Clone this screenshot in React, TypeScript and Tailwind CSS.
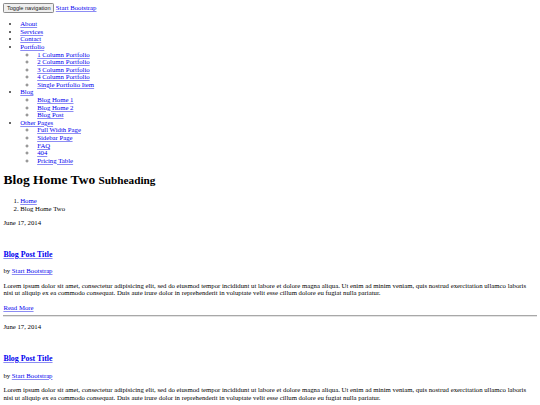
const lorem =
  "Lorem ipsum dolor sit amet, consectetur adipisicing elit, sed do eiusmod tempor incididunt ut labore et dolore magna aliqua. Ut enim ad minim veniam, quis nostrud exercitation ullamco laboris nisi ut aliquip ex ea commodo consequat. Duis aute irure dolor in reprehenderit in voluptate velit esse cillum dolore eu fugiat nulla pariatur.";

const menu: { label: string; children?: string[] }[] = [
  { label: "About" },
  { label: "Services" },
  { label: "Contact" },
  {
    label: "Portfolio",
    children: ["1 Column Portfolio", "2 Column Portfolio", "3 Column Portfolio", "4 Column Portfolio", "Single Portfolio Item"],
  },
  { label: "Blog", children: ["Blog Home 1", "Blog Home 2", "Blog Post"] },
  { label: "Other Pages", children: ["Full Width Page", "Sidebar Page", "FAQ", "404", "Pricing Table"] },
];

function Link({ children }: { children: React.ReactNode }) {
  return (
    <a href="#" className="text-[#0000ee] underline decoration-[#8c8cf4]">
      {children}
    </a>
  );
}

function Rule() {
  return <hr className="my-2 h-0 border-t border-b border-t-[#a8a8a8] border-b-[#e4e4e4]" />;
}

function Post() {
  return (
    <div>
      {/* icon column: the font icon never loaded, so the paragraph is empty */}
      <div>
        <p className="my-4">
          <i />
        </p>
        <p className="my-4">June 17, 2014</p>
      </div>
      {/* broken placeholder image, still leaves one line */}
      <div className="leading-[22px]">
        <a href="#">
          <span className="inline-block" />
        </a>
      </div>
      <div>
        <h3 className="my-[18.72px] text-[18.72px] leading-[21px] font-bold">
          <Link>Blog Post Title</Link>
        </h3>
        <p className="my-4">
          by <Link>Start Bootstrap</Link>
        </p>
        <p className="my-4">{lorem}</p>
        <Link>Read More</Link>
      </div>
    </div>
  );
}

export default function App() {
  return (
    // page is laid out at 1280px and shown at 540px
    <div className="[zoom:0.421875] p-2 bg-white text-black text-[16px] leading-[18px] font-['Liberation_Serif','Times_New_Roman',serif]">
      <nav>
        <div>
          <button
            type="button"
            className="bg-[#efefef] border border-[#8a8a8a] rounded-[3px] px-[6px] py-[2px] text-[13.333px] leading-[15px] font-['Liberation_Sans',Arial,sans-serif] text-[#222]"
          >
            Toggle navigation
          </button>{" "}
          <Link>Start Bootstrap</Link>
        </div>
        <ul className="my-4 pl-10 list-disc marker:text-[#333]">
          {menu.map((m) => (
            <li key={m.label}>
              <Link>{m.label}</Link>
              {m.children && (
                <ul className="pl-10 list-[circle] marker:text-[#777]">
                  {m.children.map((c) => (
                    <li key={c}>
                      <Link>{c}</Link>
                    </li>
                  ))}
                </ul>
              )}
            </li>
          ))}
        </ul>
      </nav>

      <div>
        <h1 className="my-[21.44px] text-[32px] leading-[35px] font-bold">
          Blog Home Two <small className="text-[26.667px]">Subheading</small>
        </h1>
        <ol className="my-4 pl-10 list-decimal">
          <li>
            <Link>Home</Link>
          </li>
          <li>Blog Home Two</li>
        </ol>

        <Post />
        <Rule />
        <Post />
        <Rule />
        <Post />
        <Rule />

        <ul className="my-4 pl-10 list-disc">
          <li>
            <Link>← Older</Link>
          </li>
          <li>
            <Link>Newer →</Link>
          </li>
        </ul>
        <Rule />
        <footer>
          <p className="my-4">Copyright © Your Website 2014</p>
        </footer>
      </div>
    </div>
  );
}
